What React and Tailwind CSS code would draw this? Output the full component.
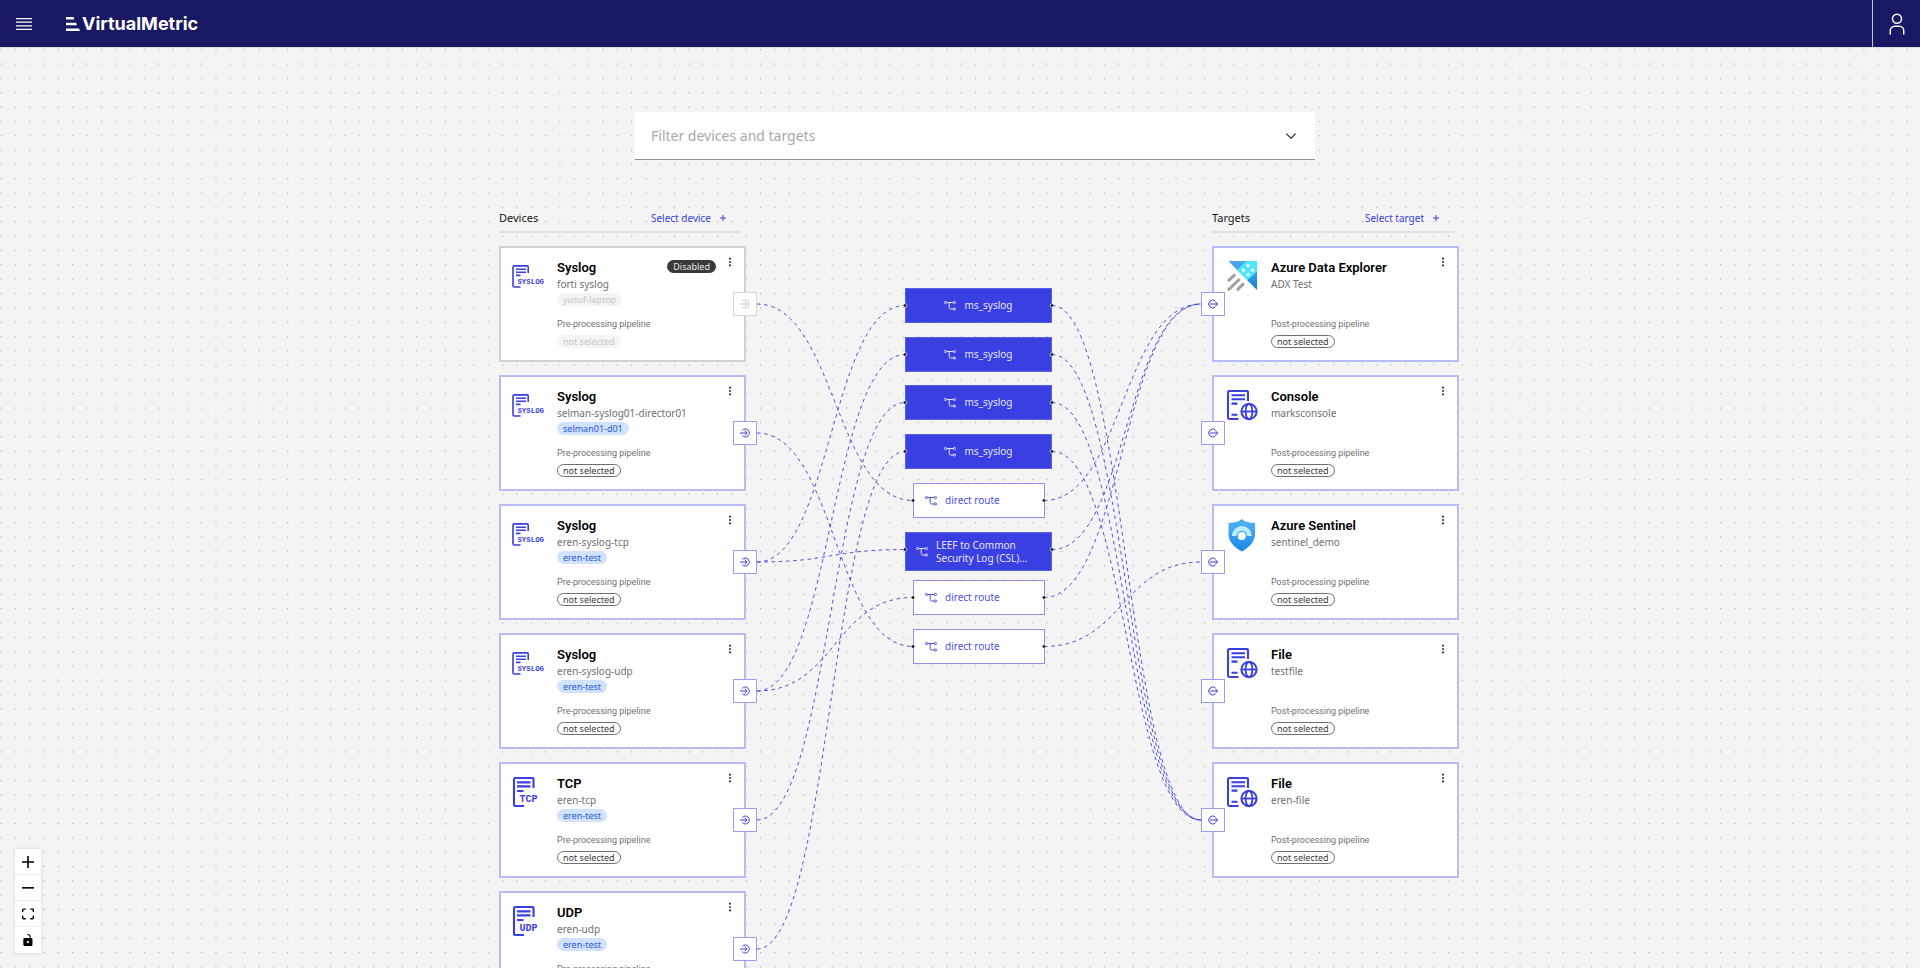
import React from "react";

const DEVICES = [
  { id: "forti", type: "Syslog", name: "forti syslog", tag: "yusuf-laptop", disabled: true },
  { id: "selman", type: "Syslog", name: "selman-syslog01-director01", tag: "selman01-d01" },
  { id: "slTcp", type: "Syslog", name: "eren-syslog-tcp", tag: "eren-test" },
  { id: "slUdp", type: "Syslog", name: "eren-syslog-udp", tag: "eren-test" },
  { id: "tcp", type: "TCP", name: "eren-tcp", tag: "eren-test" },
  { id: "udp", type: "UDP", name: "eren-udp", tag: "eren-test" },
];

const TARGETS = [
  { id: "adx", type: "Azure Data Explorer", name: "ADX Test" },
  { id: "console", type: "Console", name: "marksconsole" },
  { id: "sentinel", type: "Azure Sentinel", name: "sentinel_demo" },
  { id: "testfile", type: "File", name: "testfile" },
  { id: "erenfile", type: "File", name: "eren-file" },
];

// Positions on the diagram canvas, measured from its top left corner.
const ROUTES = [
  { id: "ms1", y: 78, label: "ms_syslog", kind: "pipeline" },
  { id: "ms2", y: 127, label: "ms_syslog", kind: "pipeline" },
  { id: "ms3", y: 175, label: "ms_syslog", kind: "pipeline" },
  { id: "ms4", y: 224, label: "ms_syslog", kind: "pipeline" },
  { id: "d1", y: 273, label: "direct route", kind: "direct" },
  { id: "leef", y: 322, label: "LEEF to Common Security Log (CSL)...", kind: "long" },
  { id: "d2", y: 370, label: "direct route", kind: "direct" },
  { id: "d3", y: 419, label: "direct route", kind: "direct" },
];

const INBOUND = [
  ["forti", "d1"],
  ["selman", "d3"],
  ["slTcp", "ms1"],
  ["slTcp", "leef"],
  ["slUdp", "ms2"],
  ["slUdp", "d2"],
  ["tcp", "ms3"],
  ["udp", "ms4"],
];

const OUTBOUND = [
  ["ms1", "erenfile"],
  ["ms2", "erenfile"],
  ["ms3", "erenfile"],
  ["ms4", "erenfile"],
  ["d1", "adx"],
  ["leef", "adx"],
  ["d2", "adx"],
  ["d3", "sentinel"],
];

const cardY = (list, id) => 94 + 129 * list.findIndex((c) => c.id === id);

function routePort(id, side) {
  const r = ROUTES.find((n) => n.id === id);
  const inset = r.kind === "direct" ? 8 : 0;
  return { x: side === "left" ? 406 + inset : 553 - inset, y: r.y + 17.5 };
}

function curve(a, b) {
  const mid = (a.x + b.x) / 2;
  return `M${a.x} ${a.y} C${mid} ${a.y} ${mid} ${b.y} ${b.x} ${b.y}`;
}

const EDGES = [
  ...INBOUND.map(([d, r]) => curve({ x: 258, y: cardY(DEVICES, d) }, routePort(r, "left"))),
  ...OUTBOUND.map(([r, t]) => curve(routePort(r, "right"), { x: 702, y: cardY(TARGETS, t) })),
];

function DotGrid() {
  return (
    <svg className="absolute inset-0 h-full w-full" aria-hidden="true">
      <pattern id="dots" width="14.33" height="14.33" x="0.5" y="1.2" patternUnits="userSpaceOnUse">
        <circle cx="0.6" cy="0.6" r="0.6" fill="#999" />
      </pattern>
      <rect width="100%" height="100%" fill="url(#dots)" />
    </svg>
  );
}

function FlowIcon() {
  return (
    <svg className="h-3 w-3 shrink-0" viewBox="0 0 12 12" fill="none" stroke="currentColor" strokeWidth="1" aria-hidden="true">
      <circle cx="1.5" cy="2.5" r="1.1" />
      <circle cx="10.4" cy="2.5" r="1.1" />
      <circle cx="10.4" cy="9" r="1.1" />
      <path d="M2.6 2.5H9.3M5.2 2.5V7.6Q5.2 9 6.6 9H9.3" />
    </svg>
  );
}

function InIcon() {
  return (
    <svg className="h-3 w-3" viewBox="0 0 12 12" fill="none" stroke="currentColor" strokeWidth="1" aria-hidden="true">
      <path d="M1 6H8M5.7 3.7L8 6L5.7 8.3" />
      <path d="M3.2 3.4A4 4 0 1 1 3.2 8.6" />
    </svg>
  );
}

function OutIcon() {
  return (
    <svg className="h-3 w-3" viewBox="0 0 12 12" fill="none" stroke="currentColor" strokeWidth="1" aria-hidden="true">
      <path d="M3 6H10.6M8.6 4L10.6 6L8.6 8" />
      <path d="M8.6 3.2A4 4 0 1 0 8.6 8.8" />
    </svg>
  );
}

function SyslogIcon() {
  return (
    <svg className="mt-1 h-6 w-[34px]" viewBox="0 0 34 24" fill="none" stroke="#393fe0" strokeWidth="1.6" aria-hidden="true">
      <path d="M16.2 8V1.8Q16.2 .9 15.3 .9H2.3Q1 .9 1 2.3V20.6Q1 22 2.3 22H8.5" />
      <path d="M4 4.3H14M4 7.2H14M4 10.4H8.5" />
      <text x="5.4" y="18.6" fill="#393fe0" stroke="none" fontSize="7.4" fontWeight="700" fontFamily="'Liberation Mono', monospace">SYSLOG</text>
    </svg>
  );
}

function ProtocolIcon({ label }) {
  return (
    <svg className="h-[31px] w-[27px]" viewBox="0 0 27 31" fill="none" stroke="#393fe0" strokeWidth="2.1" aria-hidden="true">
      <path d="M21.5 11V2.4Q21.5 1 20.1 1H3.6Q2 1 2 2.6V27.4Q2 29 3.6 29H12" />
      <path d="M5 5.4H18.5M5 9.4H18.5M5 14H11.5" />
      <text x="7.6" y="25" fill="#393fe0" stroke="none" fontSize="10" fontWeight="700" fontFamily="'Liberation Mono', monospace">{label}</text>
    </svg>
  );
}

function FileIcon() {
  return (
    <svg className="h-[31px] w-[31px]" viewBox="0 0 31 31" fill="none" stroke="#393fe0" strokeWidth="2.1" aria-hidden="true">
      <path d="M21 11V2.4Q21 1 19.6 1H2.6Q1 1 1 2.6V27.4Q1 29 2.6 29H11.5" />
      <path d="M4.5 5.2H18M4.5 9.2H18M4.5 13.6H10.5M4.5 24.8H10.5" />
      <circle cx="22" cy="21.5" r="7.6" />
      <ellipse cx="22" cy="21.5" rx="3.4" ry="7.6" strokeWidth="1.8" />
      <path d="M14.4 21.5H29.6" strokeWidth="1.8" />
    </svg>
  );
}

function AdxIcon() {
  return (
    <svg className="h-[31px] w-[31px]" viewBox="0 0 31 31" aria-hidden="true">
      <defs>
        <linearGradient id="adxDark" x1="0" y1="0" x2="0" y2="1">
          <stop offset="0" stopColor="#32a5ea" />
          <stop offset="1" stopColor="#1b78d3" />
        </linearGradient>
      </defs>
      <path d="M1.5 0H20L10.5 9.4Z" fill="#4aa3ec" />
      <path d="M19.5 0H30V11L20.5 19.4L10 9.2Z" fill="#50e6ff" />
      <path d="M30 10.5V29L20.2 19.2Z" fill="url(#adxDark)" />
      <g fill="#fff">
        <circle cx="21" cy="4.6" r="1.7" />
        <circle cx="16.4" cy="9.1" r="1.7" />
        <circle cx="25.6" cy="9.1" r="1.7" />
        <circle cx="21" cy="13.6" r="1.7" />
      </g>
      <path d="M1 20.2L8.2 13.4M1 29.2L12.8 18M10 29.2L16.8 22.4" stroke="#a0a0a0" strokeWidth="3" />
    </svg>
  );
}

function SentinelIcon() {
  return (
    <svg className="h-[33px] w-[29px]" viewBox="0 0 29 33" aria-hidden="true">
      <defs>
        <linearGradient id="shield" x1="0" y1="0" x2="0" y2="1">
          <stop offset="0" stopColor="#2f93dc" />
          <stop offset="0.12" stopColor="#4fb0f0" />
          <stop offset="1" stopColor="#1488ea" />
        </linearGradient>
      </defs>
      <path d="M14.8 0C18 3.4 23.5 3.6 28 4V15.5C28 24 20 29.5 14.8 32.5C9.5 29.5 1.5 24 1.5 15.5V4C6 3.6 11.5 3.4 14.8 0Z" fill="url(#shield)" />
      <path d="M4.8 17A10 10 0 0 1 24.8 17H20A5.2 5.2 0 0 0 9.6 17Z" fill="#b9ecff" />
      <circle cx="14.8" cy="17" r="4" fill="#fff" />
    </svg>
  );
}

function TypeIcon({ type }) {
  if (type === "Syslog") return <SyslogIcon />;
  if (type === "TCP" || type === "UDP") return <ProtocolIcon label={type} />;
  if (type === "Azure Data Explorer") return <AdxIcon />;
  if (type === "Azure Sentinel") return <SentinelIcon />;
  return <FileIcon />;
}

function Tag({ tone, children }) {
  const tones = {
    blue: "bg-[#d0e2ff] text-[#2459d6] px-[6px]",
    muted: "bg-[#f4f4f4] text-[#c6c6c6] px-[6px]",
    dark: "bg-[#393939] text-[#e8e8e8] px-[6px]",
    outline: "border border-[#6f6f6f] text-[#393939] px-[5px]",
  };
  return (
    <span className={`flex h-[13px] w-fit items-center rounded-full text-[9px] leading-none ${tones[tone]}`}>
      {children}
    </span>
  );
}

function Card({ item, side }) {
  const device = side === "device";
  const frame = item.disabled ? "border-[#d1d1d1]" : "border-[#b8bbf7]";
  const port = item.disabled ? "border-[#d8d8d8] text-[#c6c6c6]" : "border-[#9a9ef3] text-[#393fe0]";
  return (
    <article className={`relative flex h-[116px] border-2 bg-white ${frame}`}>
      <div className={`shrink-0 pt-[13px] ${device ? "w-14 pl-[11px]" : "w-[57px] pl-[13px]"}`}>
        <TypeIcon type={item.type} />
      </div>
      <div className="flex min-w-0 flex-1 flex-col">
        <div className="mt-3 flex h-4 items-start justify-between">
          <h3 className="font-[Roboto,sans-serif] text-[13px] font-semibold leading-4 text-black">{item.type}</h3>
          {item.disabled && <Tag tone="dark">Disabled</Tag>}
        </div>
        <p className="mt-px text-[10px] leading-[14px] text-[#6f6f6f]">{item.name}</p>
        <div className="mt-[2px] h-[13px]">
          {item.tag && <Tag tone={item.disabled ? "muted" : "blue"}>{item.tag}</Tag>}
        </div>
        <p className="mt-3 font-[Roboto,sans-serif] text-[9px] leading-3 text-[#6f6f6f]">
          {device ? "Pre-processing pipeline" : "Post-processing pipeline"}
        </p>
        <div className="mt-[5px]">
          <Tag tone={item.disabled ? "muted" : "outline"}>not selected</Tag>
        </div>
      </div>
      <button type="button" aria-label={`Options for ${item.name}`} className="flex h-7 w-7 shrink-0 items-center justify-center text-black">
        <svg className="h-[10px] w-1" viewBox="0 0 4 10" fill="currentColor" aria-hidden="true">
          <path d="M1.2 0.8H2.8V2.4H1.2ZM1.2 4.2H2.8V5.8H1.2ZM1.2 7.6H2.8V9.2H1.2Z" />
        </svg>
      </button>
      <span className={`absolute top-11 flex h-6 w-6 items-center justify-center border bg-white ${port} ${device ? "-right-[13px]" : "-left-[13px]"}`}>
        {device ? <InIcon /> : <OutIcon />}
      </span>
    </article>
  );
}

function Column({ title, action, side, items }) {
  return (
    <section className="w-[247px]">
      <div className="mr-[5px] flex h-[23px] items-start justify-between border-b-2 border-[#e0e0e0] pr-[14px]">
        <h2 className="text-[11px] leading-4 text-[#161616]">{title}</h2>
        <button type="button" className="flex items-center gap-2 text-[10px] leading-4 text-[#393fe0]">
          {action}
          <svg className="h-2 w-2" viewBox="0 0 8 8" stroke="currentColor" strokeWidth="1" aria-hidden="true">
            <path d="M4 1V7M1 4H7" />
          </svg>
        </button>
      </div>
      <div className="mt-[13px] flex flex-col gap-[13px]">
        {items.map((item) => (
          <Card key={item.id} item={item} side={side} />
        ))}
      </div>
    </section>
  );
}

function RouteNode({ route }) {
  const shapes = {
    pipeline: "left-[406px] h-[35px] w-[147px] justify-center border-[#5b60e6] bg-[#393fe0] text-[#e4e5fc]",
    long: "left-[406px] h-[39px] w-[147px] pl-[10px] border-[#5b60e6] bg-[#393fe0] text-[#e4e5fc]",
    direct: "left-[414px] h-[35px] w-[132px] pl-[11px] border-[#8d90f1] bg-white text-[#4a4fe3]",
  };
  return (
    <div className={`absolute flex items-center gap-2 border text-[10px] leading-[13px] ${shapes[route.kind]}`} style={{ top: route.y }}>
      <FlowIcon />
      <span className={route.kind === "long" ? "w-24" : ""}>{route.label}</span>
    </div>
  );
}

function ControlButton({ label, box, d, size }) {
  return (
    <button type="button" aria-label={label} className="flex h-[26px] w-[26px] items-center justify-center border-b border-[#eeeeee] bg-white last:border-b-0">
      <svg className={size} viewBox={box} aria-hidden="true">
        <path d={d} />
      </svg>
    </button>
  );
}

export default function App() {
  return (
    <div className="relative flex h-screen flex-col overflow-hidden bg-[#f4f4f4] font-['Noto_Sans',sans-serif]">
      <header className="flex h-12 shrink-0 items-center border-b border-[#e0e0e0] bg-[#191863] text-white">
        <button type="button" aria-label="Open menu" className="flex h-full w-12 items-center justify-center">
          <svg className="h-5 w-5" viewBox="0 0 20 20" fill="currentColor" aria-hidden="true">
            <path d="M2 14.8H18V16H2zM2 11.2H18V12.4H2zM2 7.6H18V8.8H2zM2 4H18V5.2H2z" />
          </svg>
        </button>
        <a href="#" className="ml-[18px] flex items-center gap-[2px]">
          <svg className="h-[14px] w-[14px]" viewBox="0 0 14 14" fill="currentColor" aria-hidden="true">
            <path d="M0 0H7.6L8.4 2.6H0ZM0 5.7H10.2L11 8.3H0ZM0 11.4H13L14 14H0Z" />
          </svg>
          <span className="font-[Inter,sans-serif] text-[18px] font-bold leading-6">VirtualMetric</span>
        </a>
        <button type="button" aria-label="Account" className="ml-auto flex h-full w-12 items-center justify-center border-l border-[#c6c6c6]">
          <svg className="h-6 w-6" viewBox="0 0 32 32" fill="currentColor" aria-hidden="true">
            <path d="M16 4a5 5 0 1 1-5 5 5 5 0 0 1 5-5m0-2a7 7 0 1 0 7 7 7 7 0 0 0-7-7zM26 30H24V25a5 5 0 0 0-5-5H13a5 5 0 0 0-5 5v5H6V25a7 7 0 0 1 7-7h6a7 7 0 0 1 7 7z" />
          </svg>
        </button>
      </header>

      <main className="relative min-h-0 flex-1">
        <DotGrid />
        <div className="relative flex justify-center pl-[30px] pt-16">
          <div className="flex h-12 w-[680px] items-center border-b border-[#8d8d8d] bg-white px-4">
            <input
              type="text"
              aria-label="Filter devices and targets"
              placeholder="Filter devices and targets"
              className="min-w-0 flex-1 bg-transparent text-sm outline-none placeholder:text-[#a8a8a8]"
            />
            <button type="button" aria-label="Show filter options" className="flex h-4 w-4 items-center justify-center text-[#161616]">
              <svg className="h-4 w-4" viewBox="0 0 16 16" fill="currentColor" aria-hidden="true">
                <path d="M8 11L3 6 3.7 5.3 8 9.6 12.3 5.3 13 6z" />
              </svg>
            </button>
          </div>
        </div>

        <div className="flex justify-center pl-[38px] pt-[50px]">
          <div className="relative flex w-[960px] justify-between">
            <svg className="pointer-events-none absolute inset-0 h-full w-full overflow-visible" fill="none" aria-hidden="true">
              {EDGES.map((d) => (
                <path key={d} d={d} stroke="#393fe0" strokeWidth="0.9" strokeDasharray="3.6" />
              ))}
            </svg>
            <Column title="Devices" action="Select device" side="device" items={DEVICES} />
            {ROUTES.map((r) => (
              <RouteNode key={r.id} route={r} />
            ))}
            <svg className="pointer-events-none absolute inset-0 h-full w-full overflow-visible" aria-hidden="true">
              {ROUTES.map((r) =>
                ["left", "right"].map((side) => {
                  const p = routePort(r.id, side);
                  return <circle key={r.id + side} cx={p.x} cy={p.y} r="1.8" fill="#161616" stroke="#f4f4f4" strokeWidth="0.7" />;
                })
              )}
            </svg>
            <Column title="Targets" action="Select target" side="target" items={TARGETS} />
          </div>
        </div>
      </main>

      <div className="absolute bottom-[15px] left-[15px] flex flex-col shadow-[0_0_2px_1px_rgba(0,0,0,0.08)]">
        <ControlButton label="Zoom in" size="h-3 w-3" box="0 0 32 32" d="M32 18.133H18.133V32h-4.266V18.133H0v-4.266h13.867V0h4.266v13.867H32z" />
        <ControlButton label="Zoom out" size="h-[2px] w-3" box="0 0 32 5" d="M0 0h32v4.2H0z" />
        <ControlButton label="Fit view" size="h-3 w-3" box="0 0 32 30" d="M3.692 4.63c0-.53.4-.938.939-.938h5.215V0H4.708C2.13 0 0 2.054 0 4.63v5.216h3.692V4.631zM27.354 0h-5.2v3.692h5.17c.53 0 .984.4.984.939v5.215H32V4.631A4.624 4.624 0 0027.354 0zm.954 24.83c0 .532-.4.94-.939.94h-5.215v3.768h5.215c2.577 0 4.631-2.13 4.631-4.707v-5.139h-3.692v5.139zm-23.677.94c-.531 0-.939-.4-.939-.94v-5.138H0v5.139c0 2.577 2.13 4.707 4.708 4.707h5.138V25.77H4.631z" />
        <ControlButton label="Lock view" size="h-3 w-3" box="0 0 25 32" d="M21.333 10.667H19.81V7.619C19.81 3.429 16.38 0 12.19 0c-4.114 1.828-1.37 2.133.305 2.438 1.676.305 4.42 2.59 4.42 5.181v3.048H3.047A3.056 3.056 0 000 13.714v15.238A3.056 3.056 0 003.048 32h18.285a3.056 3.056 0 003.048-3.048V13.714a3.056 3.056 0 00-3.048-3.047zM12.19 24.533a3.056 3.056 0 01-3.047-3.047 3.056 3.056 0 013.047-3.048 3.056 3.056 0 013.048 3.048 3.056 3.056 0 01-3.048 3.047z" />
      </div>
    </div>
  );
}
